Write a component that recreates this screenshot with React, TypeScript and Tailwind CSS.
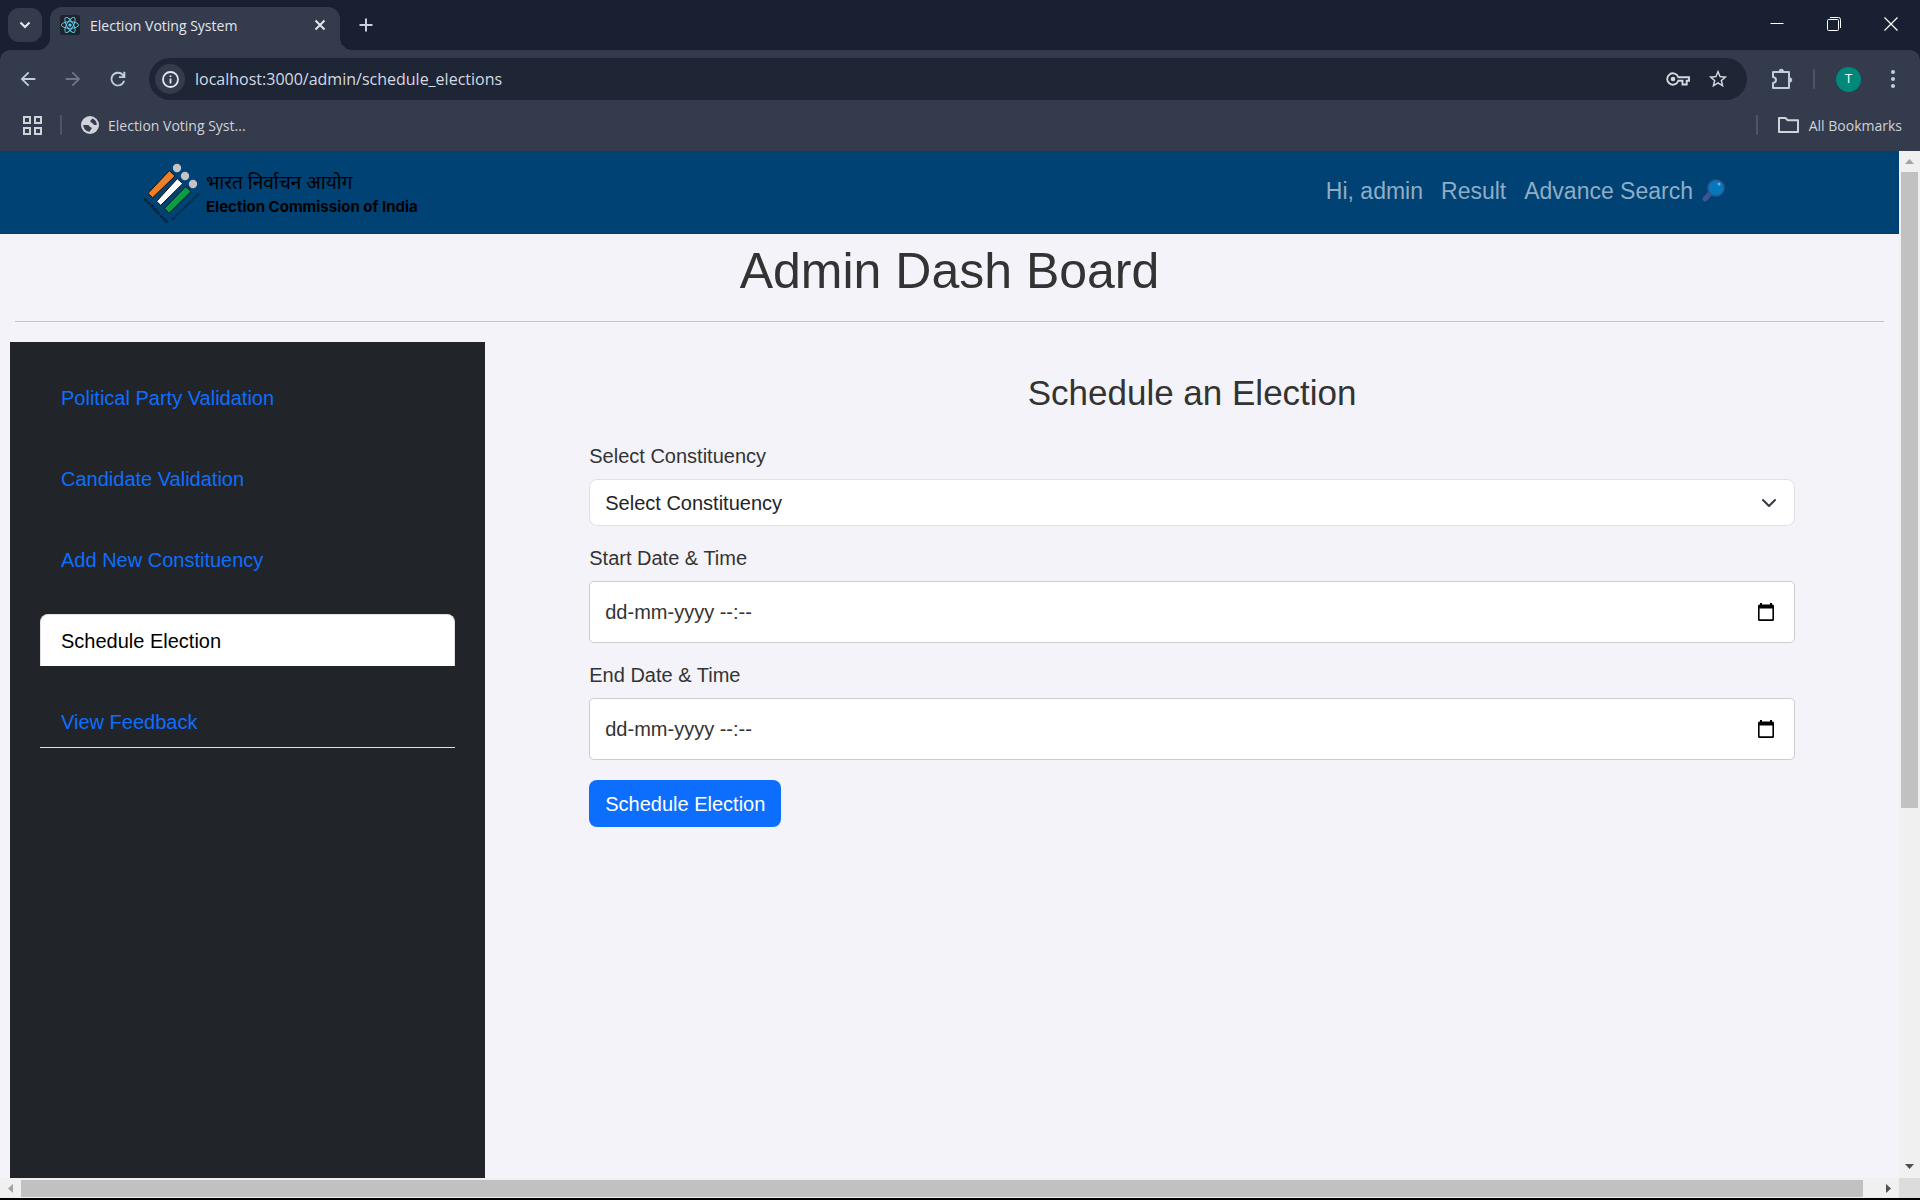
import React from "react";

const tabs = [
  "Political Party Validation",
  "Candidate Validation",
  "Add New Constituency",
  "Schedule Election",
  "View Feedback",
];
const activeTab = "Schedule Election";

const material = "shrink-0 fill-current";

function ReactFavicon() {
  return (
    <svg className="size-5 shrink-0" viewBox="0 0 20 20" aria-hidden="true">
      <rect width="20" height="20" rx="2" fill="#20232a" />
      <g fill="none" stroke="#5fd3f3" strokeWidth="0.9">
        <ellipse cx="10" cy="10" rx="8.6" ry="3.3" />
        <ellipse cx="10" cy="10" rx="8.6" ry="3.3" transform="rotate(60 10 10)" />
        <ellipse cx="10" cy="10" rx="8.6" ry="3.3" transform="rotate(120 10 10)" />
      </g>
      <circle cx="10" cy="10" r="1.6" fill="#5fd3f3" />
    </svg>
  );
}

function TitleBar() {
  return (
    <div className="flex h-[50px] shrink-0 items-end pl-2">
      <button aria-label="Search tabs" className="mb-2 grid size-[34px] place-items-center rounded-[11px] bg-[#333b4c]">
        <svg width="12" height="12" viewBox="0 0 12 12" fill="none" stroke="#e3e6ee" strokeWidth="2.2" aria-hidden="true">
          <path d="M1.5 3.5 6 8l4.5-4.5" />
        </svg>
      </button>
      <div className="relative ml-2 flex h-[43px] w-[290px] items-center rounded-t-[12px] bg-[#333b4c] pr-[14px] pb-[7px] pl-[10px]">
        <span className="absolute bottom-0 -left-3 size-3 bg-[radial-gradient(circle_at_0_0,#182031_12px,#333b4c_12px)]" />
        <span className="absolute -right-3 bottom-0 size-3 bg-[radial-gradient(circle_at_100%_0,#182031_12px,#333b4c_12px)]" />
        <ReactFavicon />
        <span className="ml-[10px] flex-1 whitespace-nowrap text-[14px] text-[#e3e6ee]">Election Voting System</span>
        <button aria-label="Close tab">
          <svg width="12" height="12" viewBox="0 0 12 12" stroke="#e3e6ee" strokeWidth="2" aria-hidden="true">
            <path d="M1.5 1.5l9 9M10.5 1.5l-9 9" />
          </svg>
        </button>
      </div>
      <button aria-label="New tab" className="mb-[18px] ml-[19px]">
        <svg width="14" height="14" viewBox="0 0 14 14" stroke="#c8cfe0" strokeWidth="2" aria-hidden="true">
          <path d="M7 0.5v13M0.5 7h13" />
        </svg>
      </button>
      <div className="mb-[19px] ml-auto flex items-center gap-[43px] pr-[22px]">
        <button aria-label="Minimize">
          <svg width="14" height="14" viewBox="0 0 14 14" stroke="#fff" aria-hidden="true"><path d="M0.5 6.5h13" /></svg>
        </button>
        <button aria-label="Restore">
          <svg width="14" height="14" viewBox="0 0 14 14" fill="none" stroke="#fff" aria-hidden="true">
            <rect x="0.5" y="2.5" width="11" height="11" rx="1" />
            <path d="M3 .5h8.5a2 2 0 0 1 2 2V11" />
          </svg>
        </button>
        <button aria-label="Close window">
          <svg width="14" height="14" viewBox="0 0 14 14" stroke="#fff" strokeWidth="1.2" aria-hidden="true"><path d="M.5.5l13 13M13.5.5l-13 13" /></svg>
        </button>
      </div>
    </div>
  );
}

function Toolbar() {
  return (
    <div className="flex h-[58px] shrink-0 items-center rounded-t-[10px] bg-[#333b4c] pr-[17px] pl-[17px] text-[#c3cbe2]">
      <button aria-label="Back">
        <svg className={material} width="22" height="22" viewBox="0 0 24 24"><path d="M20 11H7.83l5.59-5.59L12 4l-8 8 8 8 1.41-1.41L7.83 13H20v-2z" /></svg>
      </button>
      <button aria-label="Forward" className="ml-[23px] text-[#6f7786]">
        <svg className={material} width="22" height="22" viewBox="0 0 24 24"><path d="M12 4l-1.41 1.41L16.17 11H4v2h12.17l-5.58 5.59L12 20l8-8z" /></svg>
      </button>
      <button aria-label="Reload" className="ml-[23px]">
        <svg className={material} width="22" height="22" viewBox="0 0 24 24"><path d="M12 20a8 8 0 1 1 5.8-13.5V4H20v7h-7V9h4a6 6 0 1 0 .6 5h2.1A8 8 0 0 1 12 20z" /></svg>
      </button>
      <div className="ml-5 flex h-[42px] flex-1 items-center rounded-full bg-[#1e2636] pr-[18px] pl-[6px]">
        <button aria-label="Site information" className="grid size-[30px] place-items-center rounded-full bg-[#333b4c] text-[#e3e6ee]">
          <svg width="17" height="17" viewBox="0 0 17 17" fill="none" stroke="currentColor" strokeWidth="1.8" aria-hidden="true">
            <circle cx="8.5" cy="8.5" r="7.5" />
            <path d="M8.5 7.5v5M8.5 4.5v1.6" />
          </svg>
        </button>
        <input
          aria-label="Address"
          className="ml-[10px] h-8 flex-1 bg-transparent text-[16px] text-[#d5d9e2] outline-none"
          defaultValue="localhost:3000/admin/schedule_elections"
        />
        <button aria-label="Saved passwords" className="text-[#d5d9e2]">
          <svg width="24" height="14" viewBox="0 0 24 14" fill="none" stroke="currentColor" strokeWidth="1.9" aria-hidden="true">
            <path d="M12.3 5.2A5.7 5.7 0 1 0 12.3 8.8H16.5v3.7h4.2V8.8H23V5.2z" />
            <circle cx="7" cy="7" r="2.3" fill="currentColor" stroke="none" />
          </svg>
        </button>
        <button aria-label="Bookmark this page" className="ml-[17px] text-[#d5d9e2]">
          <svg className={material} width="22" height="22" viewBox="0 0 24 24"><path d="M22 9.24l-7.19-.62L12 2 9.19 8.63 2 9.24l5.46 4.73L5.82 21 12 17.27 18.18 21l-1.63-7.03L22 9.24zM12 15.4l-3.76 2.27 1-4.28-3.32-2.88 4.38-.38L12 6.1l1.71 4.04 4.38.38-3.32 2.88 1 4.28L12 15.4z" /></svg>
        </button>
      </div>
      <button aria-label="Extensions" className="ml-6">
        <svg width="22" height="22" viewBox="0 0 22 22" fill="none" stroke="currentColor" strokeWidth="2" strokeLinejoin="round" aria-hidden="true">
          <path d="M2 4h16v16H2v-5c4-.5 4-5.5 0-6z" />
          <path d="M8 3.5a2.3 2.3 0 0 1 4.6 0zM18.5 9.7a2.3 2.3 0 0 1 0 4.600z" fill="currentColor" strokeWidth="1" />
        </svg>
      </button>
      <span className="ml-5 h-5 w-[2px] rounded bg-[#4d5566]" />
      <button aria-label="Profile" className="ml-[21px] grid size-[25px] place-items-center rounded-full bg-[#00897b] text-[13px] text-white">T</button>
      <button aria-label="Menu" className="ml-[22px]">
        <svg width="20" height="20" viewBox="0 0 20 20" fill="currentColor" aria-hidden="true">
          <circle cx="10" cy="3" r="2" /><circle cx="10" cy="10" r="2" /><circle cx="10" cy="17" r="2" />
        </svg>
      </button>
    </div>
  );
}

function BookmarksBar() {
  return (
    <div className="flex h-[43px] shrink-0 items-center bg-[#333b4c] pr-[18px] pb-[9px] pl-[23px] text-[14px] text-[#d0d3da]">
      <button aria-label="Apps">
        <svg width="19" height="19" viewBox="0 0 19 19" fill="none" stroke="currentColor" strokeWidth="2" aria-hidden="true">
          <path d="M1 1h6v6H1zM12 1h6v6h-6zM1 12h6v6H1zM12 12h6v6h-6z" />
        </svg>
      </button>
      <span className="ml-[18px] h-5 w-[2px] rounded bg-[#4d5566]" />
      <a href="#bookmark" className="ml-[19px] flex items-center gap-[9px] whitespace-nowrap">
        <svg width="18" height="18" viewBox="0 0 18 18" aria-hidden="true">
          <circle cx="9" cy="9" r="9" fill="currentColor" />
          <path d="M2.200 8.800c2 .6 3.200 0 4.800.2 1.700.2 1 2 2.600 2.300 1.500.2 1.400 1.500.4 2.100-.8.500-.6 1.400-1.700 2.400A6.800 6.800 0 0 1 2.200 8.800z" fill="#333b4c" />
          <path d="M11.200 2.600c-.2 1.400-1.800 1.200-1.800 2.600 0 1.600 1.800 1.200 2.400 2.400.7 1.300 2.200 1.600 4 1.400A6.800 6.800 0 0 0 11.200 2.600z" fill="#333b4c" />
        </svg>
        Election Voting Syst...
      </a>
      <span className="ml-auto h-5 w-[2px] rounded bg-[#4d5566]" />
      <button className="ml-5 flex items-center gap-[10px] whitespace-nowrap">
        <svg width="21" height="16" viewBox="0 0 21 16" fill="none" stroke="currentColor" strokeWidth="2" strokeLinejoin="round" aria-hidden="true">
          <path d="M1 1h6.5l2 2.2H20V15H1z" />
        </svg>
        All Bookmarks
      </button>
    </div>
  );
}

function Emblem() {
  return (
    <svg width="60" height="60" viewBox="66 54 180 180" className="shrink-0 overflow-visible" aria-hidden="true">
      <g stroke="#111" strokeWidth="3">
        <path d="M84 145 148 77 165 93 98 158z" fill="#f08028" />
        <path d="M110 169 172 101 188 116 122 181z" fill="#fff" />
        <path d="M133 190 197 125 213 140 147 205z" fill="#0a9c48" />
      </g>
      <g fill="#c4c4c6">
        <circle cx="171" cy="69" r="12.5" />
        <circle cx="195" cy="93" r="12.5" />
        <circle cx="219" cy="117" r="12.5" />
      </g>
      <g fill="#0a1520" fontWeight="bold">
        <text x="69" y="163" fontSize="12" transform="rotate(46 69 163)" className="font-['Noto_Sans_Devanagari','Noto_Sans',sans-serif]">भारत निर्वाचन आयोग</text>
        <text x="158" y="226" fontSize="8" transform="rotate(-44 158 226)" className="font-[Inter,sans-serif]">Election Commission of India</text>
      </g>
    </svg>
  );
}

function SearchGlass() {
  return (
    <svg width="23" height="23" viewBox="0 0 23 23" aria-hidden="true">
      <path d="M3 20 9 13.5" stroke="#3a5590" strokeWidth="5" strokeLinecap="round" />
      <circle cx="14" cy="9" r="8" fill="#0579bd" stroke="#2f5592" strokeWidth="1.6" />
      <circle cx="17" cy="5" r="1.5" fill="#6fb3dc" />
    </svg>
  );
}

function SiteHeader() {
  return (
    <header className="flex h-[83px] shrink-0 items-center justify-between bg-[#004274] pr-[174px] pl-[142px]">
      <a href="#home" className="flex items-center gap-1 text-black">
        <Emblem />
        <span className="flex flex-col pt-1">
          <span className="font-['Noto_Sans_Devanagari','Noto_Sans',sans-serif] text-[19px] leading-6">भारत निर्वाचन आयोग</span>
          <span className="whitespace-nowrap font-[Inter,sans-serif] text-[15px] leading-5 font-bold">Election Commission of India</span>
        </span>
      </a>
      <nav className="flex items-center gap-[18px] whitespace-nowrap pb-1 text-[23px] leading-8 text-[#8fadc4]">
        <a href="#admin">Hi, admin</a>
        <a href="#result">Result</a>
        <a href="#search" className="flex items-center gap-[9px]">
          Advance Search <SearchGlass />
        </a>
      </nav>
    </header>
  );
}

function Sidebar() {
  return (
    <aside className="w-[calc(25%+3px)] shrink-0 bg-[#212529] px-[30px] pt-[29px]">
      <nav className="flex flex-col gap-[29px] border-b border-[#dee2e6] text-[20px]">
        {tabs.map((tab) => (
          <a
            key={tab}
            href="#tab"
            aria-current={tab === activeTab ? "page" : undefined}
            className={
              tab === activeTab
                ? "flex h-[52px] items-center rounded-t-lg border border-b-0 border-[#dee2e6] bg-white px-5 text-black"
                : "flex h-[52px] items-center border border-b-0 border-transparent px-5 text-[#0d6efd]"
            }
          >
            {tab}
          </a>
        ))}
      </nav>
    </aside>
  );
}

function DateField({ id, label }: { id: string; label: string }) {
  return (
    <div className="mt-[17px] flex flex-col gap-2">
      <label htmlFor={id} className="leading-[30px]">{label}</label>
      <div className="flex h-[62px] items-center rounded-[5px] border border-[#ccc] bg-white pr-5 pl-[15px]">
        <input id={id} type="text" placeholder="dd-mm-yyyy --:--" className="h-full flex-1 bg-transparent outline-none placeholder:text-[#333]" />
        <button type="button" aria-label={"Open calendar for " + label}>
          <svg width="16" height="18" viewBox="0 0 16 18" aria-hidden="true">
            <path d="M2 0h2v1.5h8V0h2v1.5h.5A1.5 1.5 0 0 1 16 3v13.5a1.5 1.5 0 0 1-1.5 1.5h-13A1.5 1.5 0 0 1 0 16.5V3a1.5 1.5 0 0 1 1.5-1.5H2zM1.6 5.5v10.8h12.8V5.5z" fill="#000" />
          </svg>
        </button>
      </div>
    </div>
  );
}

function ScheduleForm() {
  return (
    <main className="flex-1 px-[104px] pt-[30px]">
      <h2 className="text-center text-[35px] leading-[42px]">Schedule an Election</h2>
      <form className="mt-[27px] text-[20px]">
        <div className="flex flex-col gap-2">
          <label htmlFor="constituency" className="leading-[30px]">Select Constituency</label>
          <div className="relative">
            <select id="constituency" className="h-[47px] w-full appearance-none rounded-lg border border-[#dee2e6] bg-white px-[15px] text-[#212529]">
              <option>Select Constituency</option>
            </select>
            <svg className="pointer-events-none absolute top-4 right-[18px]" width="16" height="16" viewBox="0 0 16 16" fill="none" stroke="#343a40" strokeWidth="2" strokeLinecap="round" strokeLinejoin="round" aria-hidden="true">
              <path d="m2 5 6 6 6-6" />
            </svg>
          </div>
        </div>
        <DateField id="start" label="Start Date & Time" />
        <DateField id="end" label="End Date & Time" />
        <button type="button" className="mt-5 h-[47px] rounded-lg bg-[#0d6efd] px-4 text-white">Schedule Election</button>
      </form>
    </main>
  );
}

function VerticalScrollbar() {
  return (
    <div className="flex w-[21px] shrink-0 flex-col items-center bg-[#f0f0f0]" aria-hidden="true">
      <div className="grid h-[21px] place-items-center">
        <svg width="9" height="5" viewBox="0 0 9 5" fill="#a3a3a3"><path d="M0 5 4.5 0 9 5z" /></svg>
      </div>
      <div className="h-[636px] w-[17px] bg-[#c1c1c1]" />
      <div className="mt-auto grid h-[24px] place-items-center">
        <svg width="9" height="5" viewBox="0 0 9 5" fill="#505050"><path d="M0 0h9L4.5 5z" /></svg>
      </div>
    </div>
  );
}

function HorizontalScrollbar() {
  return (
    <div className="flex h-5 shrink-0 bg-[#f0f0f0]" aria-hidden="true">
      <div className="grid w-[21px] place-items-center">
        <svg width="5" height="9" viewBox="0 0 5 9" fill="#a3a3a3"><path d="M5 0v9L0 4.5z" /></svg>
      </div>
      <div className="my-auto h-[17px] flex-1 bg-[#c1c1c1]" />
      <div className="grid w-9 place-items-center pl-[14px]">
        <svg width="5" height="9" viewBox="0 0 5 9" fill="#505050"><path d="M0 0v9l5-4.5z" /></svg>
      </div>
      <div className="w-[21px] bg-[#dcdcdc]" />
    </div>
  );
}

export default function App() {
  return (
    <div className="flex h-screen flex-col overflow-hidden bg-[#182031] font-['Open_Sans','Noto_Sans',sans-serif]">
      <TitleBar />
      <Toolbar />
      <BookmarksBar />
      <div className="flex min-h-0 flex-1">
        <div className="flex min-w-0 flex-1 flex-col overflow-hidden bg-[#f4f3f9] font-['Liberation_Sans',Arial,sans-serif] text-[#333]">
          <SiteHeader />
          <h1 className="mt-[7px] text-center text-[50px] leading-[60px]">Admin Dash Board</h1>
          <hr className="mx-[15px] my-5 border-[#c4c3c8]" />
          <div className="flex flex-1 pl-[10px]">
            <Sidebar />
            <ScheduleForm />
          </div>
        </div>
        <VerticalScrollbar />
      </div>
      <HorizontalScrollbar />
      <div className="h-[2px] shrink-0 bg-black" />
    </div>
  );
}
